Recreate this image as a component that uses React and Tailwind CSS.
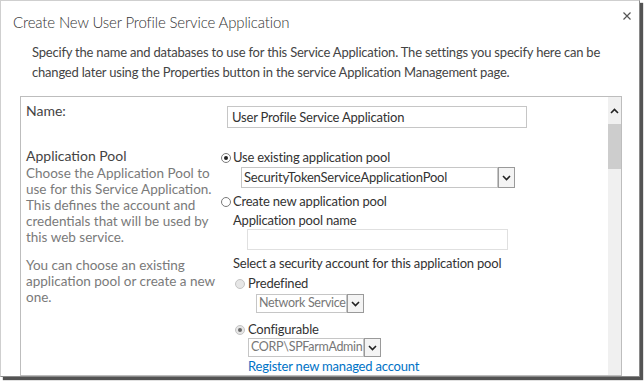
const font = { fontFamily: 'Lato, "Open Sans", sans-serif' };

function Radio({ checked, disabled, className = "" }) {
  const ring = disabled
    ? "border-[#c4c4c4] bg-[#e6e6e6]"
    : "border-[#7a7a7a] bg-white";
  return (
    <span
      className={`inline-flex w-[10px] h-[10px] rounded-full border items-center justify-center shrink-0 ${ring} ${className}`}
    >
      {checked && (
        <span
          className={`w-[4px] h-[4px] rounded-full ${disabled ? "bg-[#6a6a6a]" : "bg-[#222]"}`}
        />
      )}
    </span>
  );
}

function Chevron({ up }) {
  return (
    <svg width="9" height="6" viewBox="0 0 9 6">
      <polyline
        points={up ? "1,5 4.5,1.5 8,5" : "1,1 4.5,4.5 8,1"}
        fill="none"
        stroke="#222"
        strokeWidth="1.6"
      />
    </svg>
  );
}

function Select({ value, className, disabled, textClass = "" }) {
  return (
    <div className={`flex ${className}`}>
      <div
        className={`flex-1 border border-[#c6c6c6] flex items-center pl-[2px] leading-none overflow-hidden ${disabled ? "text-[#777]" : "text-[#333]"} ${textClass}`}
      >
        {value}
      </div>
      <div className="w-[17px] border border-[#9a9a9a] bg-[#f4f4f4] flex items-center justify-center">
        <Chevron />
      </div>
    </div>
  );
}

export default function App() {
  return (
    <div className="w-[644px] h-[382px] bg-white overflow-hidden whitespace-nowrap" style={font}>
      <div className="w-[640px] h-[377px] bg-white border-t border-l border-[#cfcfcf] border-r border-b border-r-[#8a8a8a] border-b-[#8a8a8a] shadow-[3px_3px_1px_rgba(40,40,40,0.8)] overflow-hidden flex flex-col">
        <div className="flex items-start justify-between pl-[12px] pr-[8px] pt-[10px] h-[41px]">
          <div className="text-[15px] leading-[22px] tracking-[-0.15px] font-light text-[#333]">
            Create New User Profile Service Application
          </div>
          <svg width="8" height="8" viewBox="0 0 8 8" className="mt-[1px]">
            <path d="M0.5 0.5L7.5 7.5M7.5 0.5L0.5 7.5" stroke="#555" strokeWidth="1.2" />
          </svg>
        </div>
        <div className="pl-[31px] pr-[10px] text-[13px] tracking-[-0.2px] leading-[20px] text-[#444] h-[55px]">
          <div>
            Specify the name and databases to use for this Service Application. The settings you specify here can be
          </div>
          <div>changed later using the Properties button in the service Application Management page.</div>
        </div>
        <div className="ml-[19px] w-[602px] flex-1 border border-[#bdbdbd] flex">
          <div className="flex-1 flex flex-col">
            <div className="flex h-[42px]">
              <div className="w-[198px] pl-[5px] pt-[5px] text-[14px] leading-[18px] text-[#444]">Name:</div>
              <div className="pl-[8px] pt-[9px]">
                <div className="w-[300px] h-[22px] border border-[#c6c6c6] flex items-center pl-[4px] pt-[1px] text-[13px] tracking-[-0.2px] text-[#333]">
                  User Profile Service Application
                </div>
              </div>
            </div>
            <div className="flex">
              <div className="w-[198px] pl-[5px] pt-[8px] text-[#444]">
                <div className="text-[14px] leading-[18px]">Application Pool</div>
                <div className="text-[13.5px] leading-[16px] text-[#7a7a7a]">
                  <div>Choose the Application Pool to</div>
                  <div>use for this Service Application.</div>
                  <div>This defines the account and</div>
                  <div>credentials that will be used by</div>
                  <div>this web service.</div>
                  <div className="mt-[12px]">You can choose an existing</div>
                  <div>application pool or create a new</div>
                  <div>one.</div>
                </div>
              </div>
              <div className="pt-[10px] text-[13px] tracking-[-0.2px] text-[#333] flex flex-col">
                <div className="flex items-center gap-[2px] h-[18px]">
                  <Radio checked className="ml-[2px]" />
                  <span>Use existing application pool</span>
                </div>
                <Select
                  value="SecurityTokenServiceApplicationPool"
                  className="ml-[22px] w-[274px] h-[21px]"
                />
                <div className="flex items-center gap-[2px] h-[18px] mt-[5px]">
                  <Radio className="ml-[2px]" />
                  <span>Create new application pool</span>
                </div>
                <div className="pl-[14px] leading-[17px] mt-[1px]">Application pool name</div>
                <div className="ml-[28px] w-[261px] h-[21px] border border-[#e0e0e0]" />
                <div className="pl-[14px] leading-[18px] mt-[4px]">
                  Select a security account for this application pool
                </div>
                <div className="flex items-center gap-[3px] h-[18px] mt-[3px] pl-[16px]">
                  <Radio disabled />
                  <span>Predefined</span>
                </div>
                <Select
                  value="Network Service"
                  disabled
                  textClass="text-[12.5px] tracking-[-0.3px]"
                  className="ml-[37px] mt-[1px] w-[108px] h-[19px]"
                />
                <div className="flex items-center gap-[3px] h-[16px] mt-[9px] pl-[16px]">
                  <Radio checked disabled />
                  <span>Configurable</span>
                </div>
                <Select
                  value="CORP\SPFarmAdmin"
                  disabled
                  textClass="text-[12.5px] tracking-[-0.3px]"
                  className="ml-[29px] w-[133px] h-[19px]"
                />
                <a className="ml-[29px] leading-[18px] text-[#0072c6] cursor-pointer">
                  Register new managed account
                </a>
              </div>
            </div>
          </div>
          <div className="w-[13px] bg-[#f0f0f0] flex flex-col">
            <div className="h-[27px] flex items-center justify-center">
              <Chevron up />
            </div>
            <div className="h-[45px] bg-[#cdcdcd]" />
          </div>
        </div>
      </div>
    </div>
  );
}
